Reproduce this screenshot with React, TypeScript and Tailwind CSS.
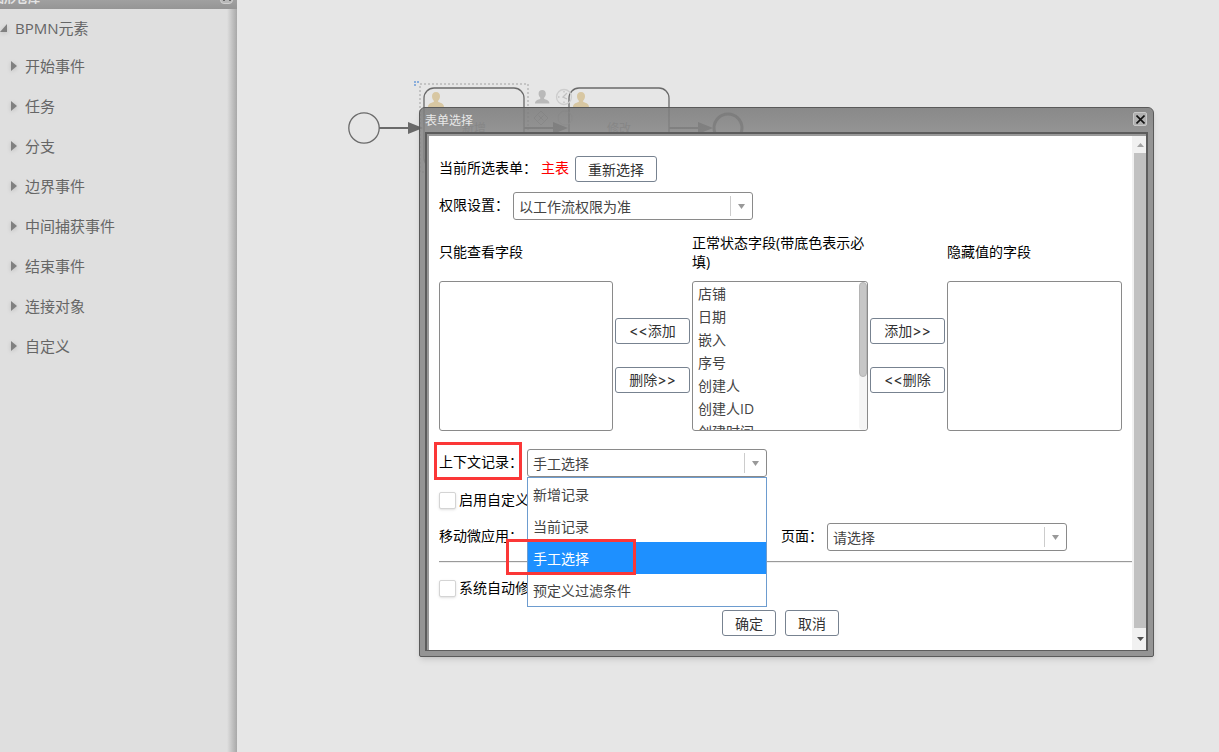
import type { ReactNode } from "react";
import clsx from "clsx";

const treeItems = ["开始事件", "任务", "分支", "边界事件", "中间捕获事件", "结束事件", "连接对象", "自定义"];
const normalFields = ["店铺", "日期", "嵌入", "序号", "创建人", "创建人ID", "创建时间"];
const recordOptions = ["新增记录", "当前记录", "手工选择", "预定义过滤条件"];

function Sidebar() {
  return (
    <aside className="relative flex w-[237px] shrink-0 flex-col bg-[#dfdfdf] text-[15px] text-[#666]">
      <header className="flex h-[9px] items-end justify-between overflow-hidden bg-linear-to-b from-[#a0a0a0] to-[#959595]">
        <h2 className="-ml-2 pb-0.5 text-xs leading-4 font-bold text-[#e4e4e4]">图形仓库</h2>
        <button
          type="button"
          aria-label="折叠"
          className="mr-1 mb-[5px] flex h-4 w-[13px] items-end justify-center gap-1 rounded-sm border border-[#d0d0d0] bg-[#b8b8b8] pb-0.5"
        >
          <span className="size-0.5 bg-[#666]" />
          <span className="size-0.5 bg-[#666]" />
        </button>
      </header>
      <nav className="pt-2">
        <button type="button" className="flex h-[22px] items-center gap-2 leading-[22px]">
          <svg className="h-2 w-[7px] drop-shadow-sm" viewBox="0 0 7 8" aria-hidden="true">
            <path d="M7 0v8H0z" fill="#808080" />
          </svg>
          BPMN元素
        </button>
        <ul className="pt-[7px]">
          {treeItems.map((item) => (
            <li key={item}>
              <button type="button" className="flex h-10 items-center gap-2 pl-[11px]">
                <svg className="h-[10px] w-[6px] drop-shadow-sm" viewBox="0 0 6 10" aria-hidden="true">
                  <path d="M0 0l6 5-6 5z" fill="#808080" />
                </svg>
                {item}
              </button>
            </li>
          ))}
        </ul>
      </nav>
      <div className="absolute top-[9px] right-0 bottom-0 w-[10px] bg-linear-to-r from-[#dfdfdf] to-[#a8a8a8]" />
    </aside>
  );
}

function UserGlyph({ x, y, fill }: { x: number; y: number; fill: string }) {
  return (
    <path
      transform={`translate(${x} ${y})`}
      fill={fill}
      d="M8 0c2.600 0 4 1.700 4 4.200 0 2-.8 3.300-1.700 4.200-.3.400-.3 1.300.1 1.600C12 10.900 16 11 16 15H0c0-4 4-4.100 5.600-5 .4-.3.400-1.200.1-1.600C4.800 7.500 4 6.200 4 4.200 4 1.700 5.400 0 8 0z"
    />
  );
}

function Diagram() {
  return (
    <svg className="absolute top-0 left-0" width="520" height="200" viewBox="237 0 520 200" fill="none" aria-hidden="true">
      <rect x="420" y="84" width="108" height="88" stroke="#c4c4c4" strokeWidth="2" strokeDasharray="2 2" />
      <path d="M414 82h2m1 0h2m-5 3h2" stroke="#8aaedb" strokeWidth="2" />
      <g stroke="#6a6a6a" strokeWidth="1.300">
        <circle cx="364" cy="128" r="15.200" />
        <rect x="424" y="88" width="100" height="80" rx="10" />
        <rect x="569" y="88" width="100" height="80" rx="10" />
      </g>
      <circle cx="728" cy="128" r="14" stroke="#6a6a6a" strokeWidth="3" />
      <path d="M379 128h30M524 128h32M669 128h32" stroke="#6a6a6a" strokeWidth="2" />
      <path d="M408 122l15 6-15 6zM553 122l15 6-15 6zM698 122l15 6-15 6z" fill="#6a6a6a" />
      <UserGlyph x={428} y={92} fill="#d8c7a2" />
      <UserGlyph x={573} y={92} fill="#d8c7a2" />
      <g transform="translate(535 90) scale(.9)">
        <UserGlyph x={0} y={0} fill="#b9b9b9" />
      </g>
      <circle cx="564" cy="97" r="7.500" stroke="#cdcdcd" strokeWidth="1.300" />
      <path d="M567 93l-4 4 4 2M558 97h1.500M564 91v1.500M564 101.500v1.500" stroke="#c2c2c2" strokeWidth="1.300" />
      <path d="M541 111l7 7-7 7-7-7zM538.500 115.500l5 5m0-5l-5 5" stroke="#b0b0b0" />
      <circle cx="565" cy="118" r="7" stroke="#c8c8c8" />
      <g fill="#999" fontSize="12" textAnchor="middle">
        <text x="474" y="133">新增</text>
        <text x="619" y="133">修改</text>
      </g>
    </svg>
  );
}

function Button({ children, className }: { children: ReactNode; className?: string }) {
  return (
    <button
      type="button"
      className={clsx(
        "flex h-[26px] items-center justify-center rounded-[3px] border border-[#778290] bg-white font-['Inter','Noto_Sans_CJK_SC',sans-serif] text-[#333]",
        className,
      )}
    >
      {children}
    </button>
  );
}

function SelectBox({ id, value, options }: { id: string; value: string; options?: string[] }) {
  return (
    <div className="relative h-7 w-60">
      <select
        id={id}
        defaultValue={value}
        className="h-full w-full appearance-none rounded-[3px] border border-[#8a8a8a] bg-white pl-[5px] text-[#444] outline-none"
      >
        {(options ?? [value]).map((o) => (
          <option key={o}>{o}</option>
        ))}
      </select>
      <div className="pointer-events-none absolute top-1 right-2 flex h-5 w-[15px] items-center justify-end border-l border-[#ccc]">
        <svg className="h-[5px] w-[7px]" viewBox="0 0 7 5" aria-hidden="true">
          <path d="M0 0h7L3.500 5z" fill="#999" />
        </svg>
      </div>
    </div>
  );
}

function FieldList({ label, items = [] }: { label: string; items?: string[] }) {
  return (
    <div className="flex h-[150px] overflow-hidden rounded-[3px] border border-[#8a8a8a]">
      <ul role="listbox" aria-label={label} className="flex-1 pl-[5px] leading-[23px] text-[#444]">
        {items.map((item) => (
          <li key={item} role="option" aria-selected={false}>
            {item}
          </li>
        ))}
      </ul>
      {items.length > 0 && (
        <div className="h-full w-2 rounded-full bg-[#f5f5f5]">
          <div className="h-[95px] rounded-full border border-[#b4b4b4] bg-[#c6c6c6]" />
        </div>
      )}
    </div>
  );
}

function RecordMenu() {
  return (
    <ul
      role="listbox"
      aria-label="上下文记录"
      className="absolute top-full left-0 z-10 w-full border border-[#6d9ccf] bg-white text-[#444]"
    >
      {recordOptions.map((option) => {
        const active = option === "手工选择";
        return (
          <li
            key={option}
            role="option"
            aria-selected={active}
            className={clsx("relative h-8 pl-[5px] leading-[34px]", active && "bg-[#1e90ff] text-white")}
          >
            {option}
            {active && <div className="absolute -top-[3px] -left-[22px] h-9 w-[130px] border-3 border-[#fb3737]" />}
          </li>
        );
      })}
    </ul>
  );
}

function CheckRow({ id, label, className }: { id: string; label: string; className?: string }) {
  return (
    <div className={clsx("flex h-[17px] items-center gap-[3px]", className)}>
      <input
        id={id}
        type="checkbox"
        className="size-[17px] appearance-none rounded-xs border border-[#d4d4d4] bg-white shadow-sm"
      />
      <label htmlFor={id} className="pb-0.5">
        {label}
      </label>
    </div>
  );
}

function FormPanel() {
  return (
    <form className="flex-1 bg-white pt-5 pb-[14px] pl-[10px] text-black">
      <div className="flex h-[26px] items-center">
        <span className="pb-1">当前所选表单：</span>
        <span className="ml-1 pb-1 text-[#f00]">主表</span>
        <Button className="ml-[6px] w-[82px]">重新选择</Button>
      </div>

      <div className="mt-[10px] flex items-center gap-1">
        <label htmlFor="permission" className="pb-1">
          权限设置：
        </label>
        <SelectBox id="permission" value="以工作流权限为准" />
      </div>

      <div className="mt-[13px] mr-[10px] grid grid-cols-[174fr_75px_176fr_75px_175fr] items-center gap-x-0.5 gap-y-2">
        <h3 className="pb-1">只能查看字段</h3>
        <h3 className="col-start-3 pb-0.5">正常状态字段(带底色表示必填)</h3>
        <h3 className="col-start-5 pb-1">隐藏值的字段</h3>

        <FieldList label="只能查看字段" />
        <div className="flex flex-col gap-[23px] pb-0.5">
          <Button>&lt;&lt;添加</Button>
          <Button>删除&gt;&gt;</Button>
        </div>
        <FieldList label="正常状态字段" items={normalFields} />
        <div className="flex flex-col gap-[23px] pb-0.5">
          <Button>添加&gt;&gt;</Button>
          <Button>&lt;&lt;删除</Button>
        </div>
        <FieldList label="隐藏值的字段" />
      </div>

      <div className="mt-[18px] flex items-center gap-1">
        <div className="relative flex h-7 items-center">
          <label htmlFor="record" className="pb-1">
            上下文记录：
          </label>
          <div className="absolute -top-[7px] right-px -bottom-[3px] -left-[5px] border-3 border-[#fb3737]" />
        </div>
        <div className="relative">
          <SelectBox id="record" value="手工选择" options={recordOptions} />
          <RecordMenu />
        </div>
      </div>

      <CheckRow id="custom" label="启用自定义" className="mt-[15px]" />

      <div className="mt-[14px] flex items-center gap-1">
        <label htmlFor="app" className="pb-1">
          移动微应用：
        </label>
        <SelectBox id="app" value="请选择" />
        <label htmlFor="page" className="ml-[10px] pb-1">
          页面：
        </label>
        <SelectBox id="page" value="请选择" />
      </div>

      <hr className="mt-[10px] border-t border-b border-t-[#9a9a9a] border-b-[#eee]" />

      <CheckRow id="auto" label="系统自动修" className="mt-[17px]" />

      <div className="mt-[13px] mr-[10px] flex justify-center gap-[9px]">
        <Button className="w-[54px]">确定</Button>
        <Button className="w-[54px]">取消</Button>
      </div>
    </form>
  );
}

function Scrollbar() {
  return (
    <div className="flex w-[14px] flex-col items-center bg-[#f1f1f1] pl-0.5">
      <div className="flex h-[17px] items-center">
        <svg className="h-1 w-[7px]" viewBox="0 0 7 4" aria-hidden="true">
          <path d="M0 4h7L3.500 0z" fill="#a3a3a3" />
        </svg>
      </div>
      <div className="w-full flex-1 bg-[#c1c1c1]" />
      <div className="flex h-[22px] items-center">
        <svg className="h-1 w-[7px]" viewBox="0 0 7 4" aria-hidden="true">
          <path d="M0 0h7L3.500 4z" fill="#505050" />
        </svg>
      </div>
    </div>
  );
}

function FormDialog() {
  return (
    <section
      role="dialog"
      aria-label="表单选择"
      className="absolute top-[107px] left-[182px] w-[735px] rounded-t-md rounded-b-xs border border-[#5a5a5a] bg-[#858585]/85 px-[5px] pb-[5px] text-sm leading-[19px] shadow-md"
    >
      <header className="-mx-[5px] flex h-6 items-center justify-between rounded-t-md bg-linear-to-b from-[#707070]/30 to-transparent pr-[6px] pb-0.5 pl-[5px]">
        <h1 className="pt-1 text-xs leading-4 text-[#e8e8e8]">表单选择</h1>
        <button
          type="button"
          aria-label="关闭"
          className="flex size-[14px] items-center justify-center rounded-xs border border-[#c8c8c8] bg-[#b0b0b0]"
        >
          <svg className="size-[9px]" viewBox="0 0 9 9" aria-hidden="true">
            <path d="M.5.5l8 8m0-8l-8 8" stroke="#111" strokeWidth="1.600" />
          </svg>
        </button>
      </header>
      <div className="flex border-2 border-b border-[#5c5c5c] bg-[#999] pt-0.5 pl-0.5">
        <FormPanel />
        <Scrollbar />
      </div>
    </section>
  );
}

export default function App() {
  return (
    <div className="flex h-screen overflow-hidden bg-[#e6e6e6] font-['Open_Sans','Noto_Sans_CJK_SC',sans-serif]">
      <Sidebar />
      <main className="relative flex-1">
        <Diagram />
        <FormDialog />
      </main>
    </div>
  );
}
